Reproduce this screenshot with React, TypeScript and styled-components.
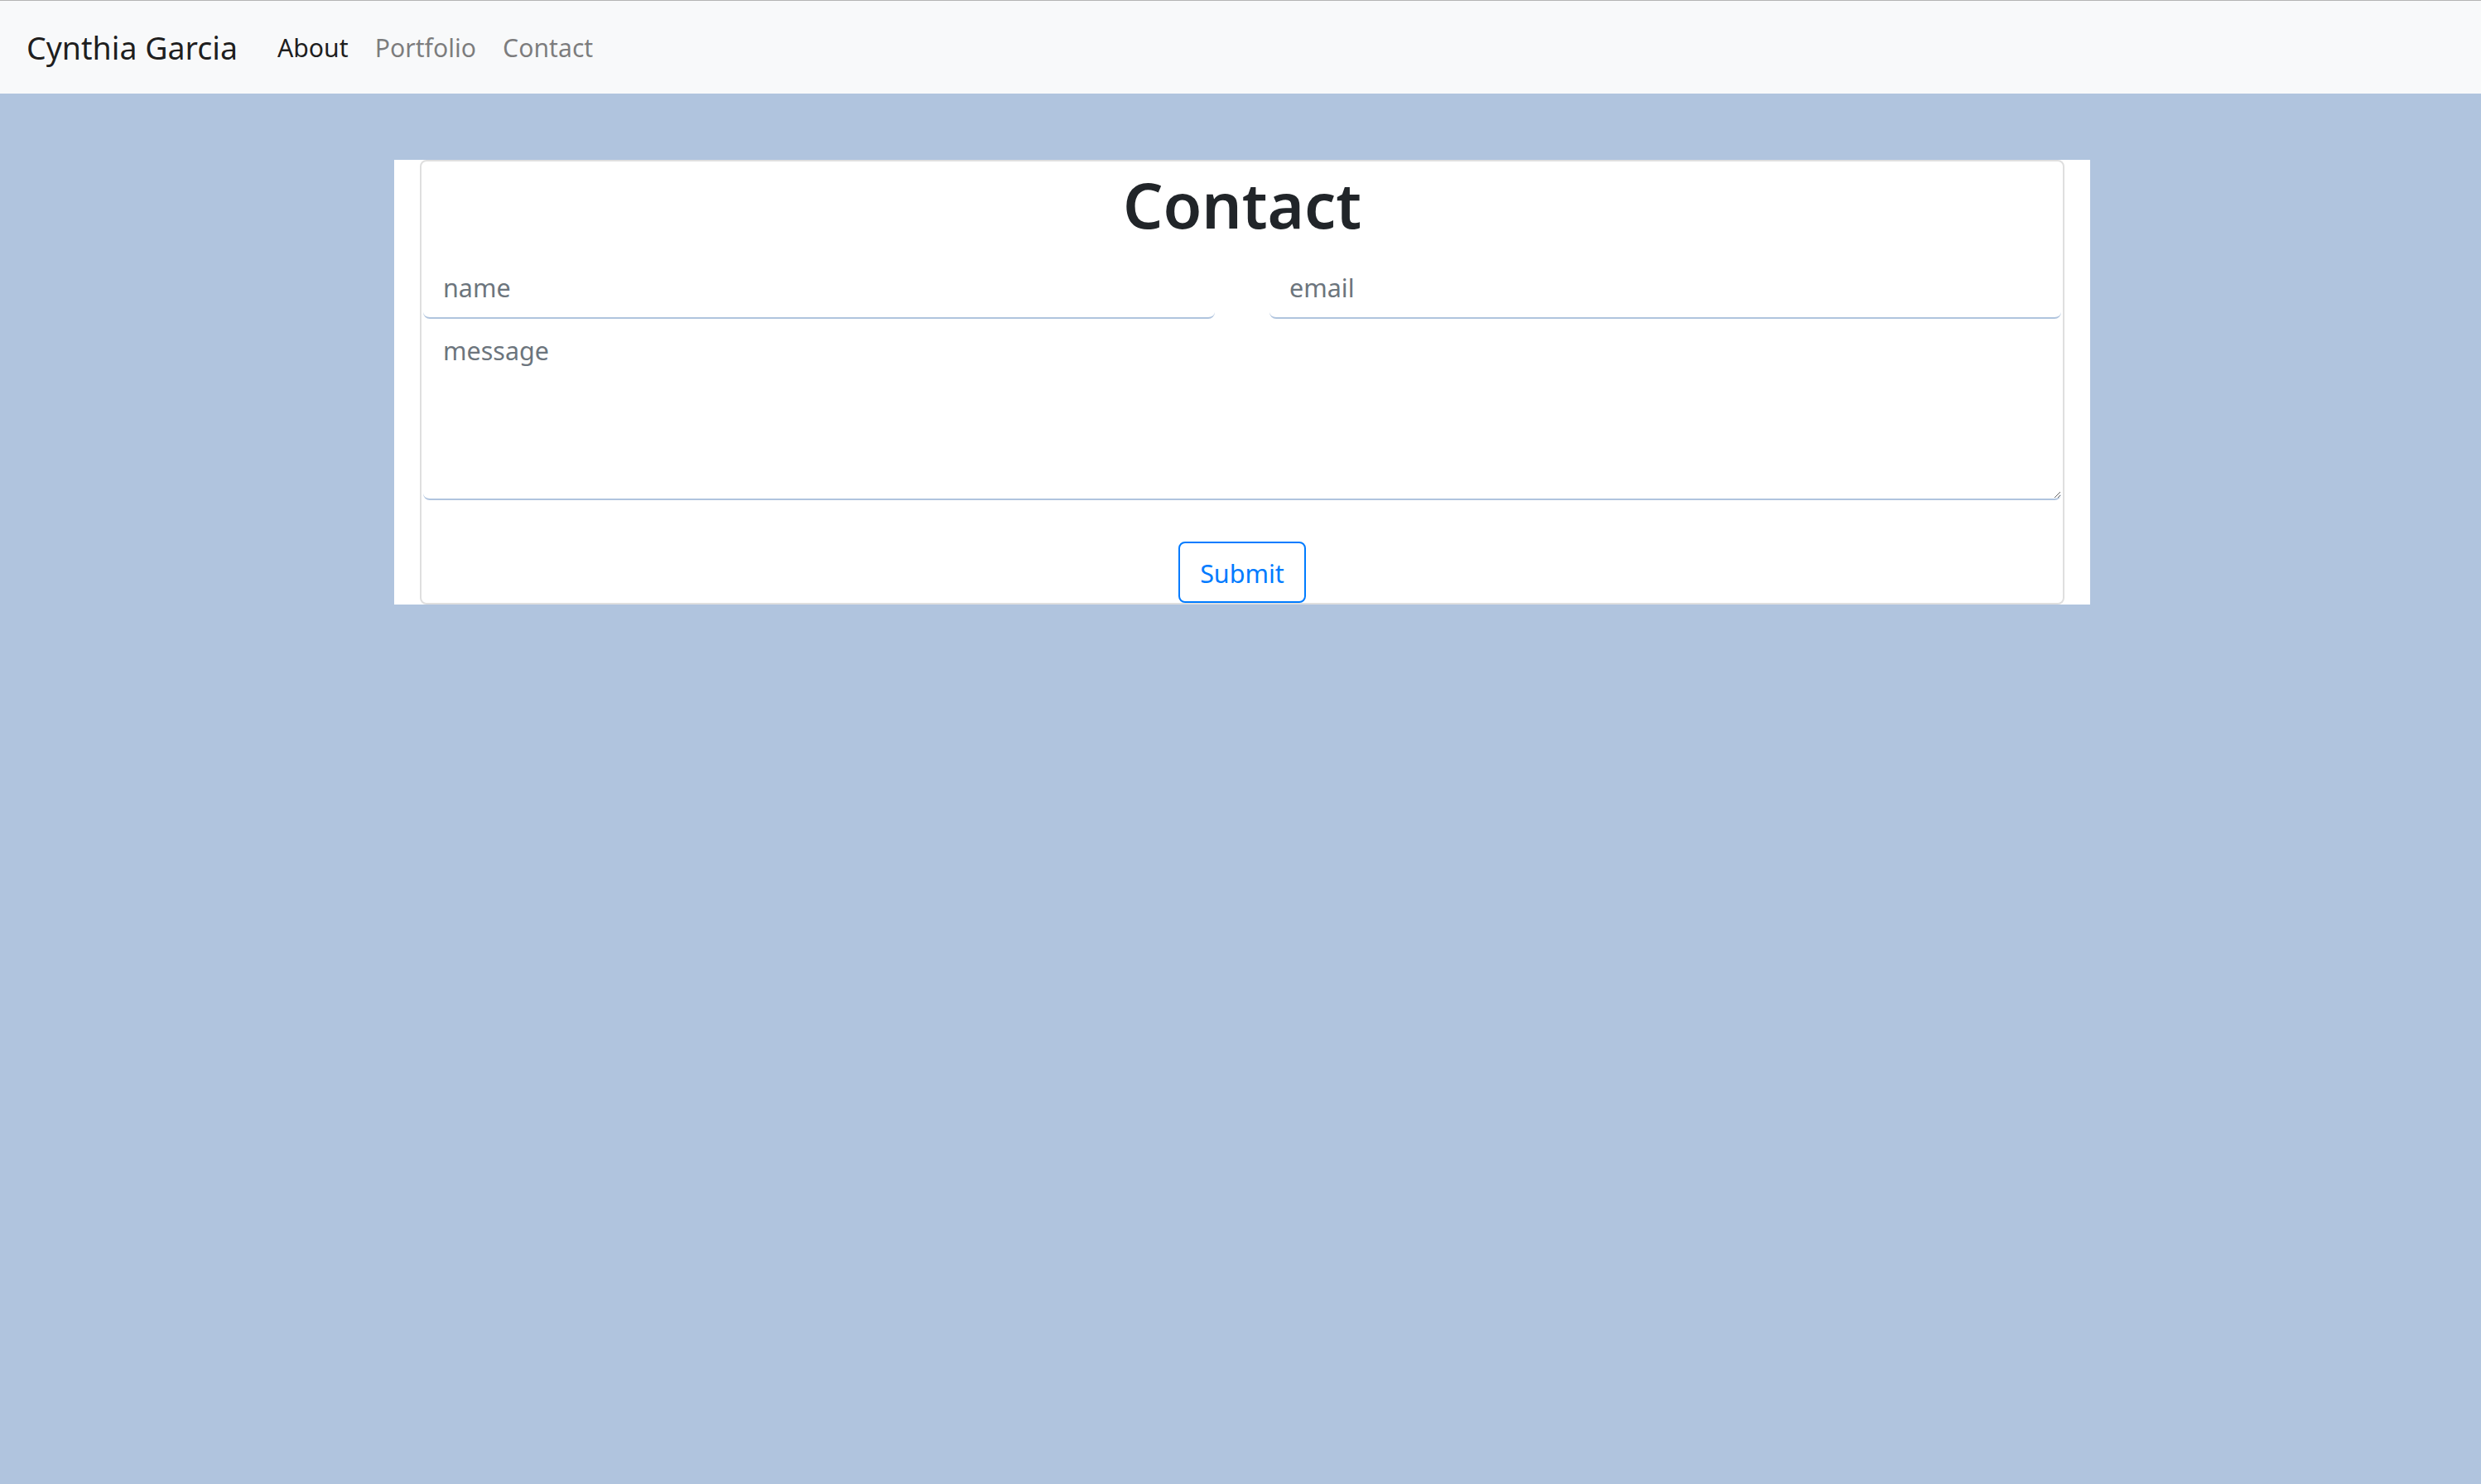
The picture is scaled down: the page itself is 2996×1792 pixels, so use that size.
import React from "react";
import styled, { createGlobalStyle } from "styled-components";

const Global = createGlobalStyle`
  html, body {
    margin: 0;
    padding: 0;
    background: #b0c4de;
    font-family: "Noto Sans", "Open Sans", sans-serif;
    color: #212529;
  }
  * { box-sizing: border-box; }
`;

const NavBar = styled.nav`
  height: 113px;
  border-top: 1px solid #b4b4b4;
  background: #f8f9fa;
  display: flex;
  align-items: center;
  padding: 2px 32px 0;
`;

const Brand = styled.a`
  font-size: 37.5px;
  line-height: 60px;
  color: rgba(0, 0, 0, 0.9);
  margin-right: 32px;
  text-decoration: none;
`;

const NavList = styled.div`
  display: flex;
  align-items: center;
`;

const NavLink = styled.a<{ $active?: boolean }>`
  font-size: 30.2px;
  line-height: 48px;
  padding: 0 16px;
  color: ${(p) => (p.$active ? "rgba(0, 0, 0, 0.9)" : "rgba(0, 0, 0, 0.5)")};
  text-decoration: none;
`;

const Main = styled.main`
  width: 2048px;
  margin: 80px 0 0 calc(50% - 1022px);
  padding: 0 31px;
  background: #ffffff;
`;

const Card = styled.section`
  border: 2px solid #dfdfdf;
  border-radius: 8px;
  display: flex;
  flex-direction: column;
  align-items: stretch;
`;

const Title = styled.h1`
  margin: 0 0 14px;
  padding-top: 4px;
  font-size: 76px;
  line-height: 96px;
  font-weight: 600;
  text-align: center;
  color: #212529;
`;

const Form = styled.form`
  display: flex;
  flex-direction: column;
  padding: 0 2px;
`;

const InputRow = styled.div`
  display: grid;
  grid-template-columns: 1fr 1fr;
  column-gap: 66px;
`;

const fieldBase = `
  border: none;
  border-bottom: 2px solid #b0c4de;
  border-radius: 8px;
  background: #ffffff;
  font-family: "Noto Sans", "Open Sans", sans-serif;
  font-size: 30.5px;
  line-height: 48px;
  color: #495057;
  outline: none;
  width: 100%;
  &::placeholder { color: #6c757d; }
`;

const TextInput = styled.input`
  ${fieldBase}
  height: 76px;
  padding: 2px 24px 0;
`;

const MessageArea = styled.textarea`
  ${fieldBase}
  display: block;
  height: 219px;
  padding: 14px 24px 12px;
  resize: vertical;
`;

const ButtonRow = styled.div`
  display: flex;
  justify-content: center;
  margin-top: 50px;
`;

const SubmitButton = styled.button`
  font-family: "Noto Sans", "Open Sans", sans-serif;
  font-size: 30.5px;
  line-height: 48px;
  padding: 12px 24px 10px;
  border: 2px solid #007bff;
  border-radius: 8px;
  background: transparent;
  color: #007bff;
  cursor: pointer;
`;

export default function App() {
  return (
    <>
      <Global />
      <NavBar>
        <Brand href="#">Cynthia Garcia</Brand>
        <NavList>
          <NavLink href="#" $active>
            About
          </NavLink>
          <NavLink href="#">Portfolio</NavLink>
          <NavLink href="#">Contact</NavLink>
        </NavList>
      </NavBar>
      <Main>
        <Card>
          <Title>Contact</Title>
          <Form onSubmit={(e) => e.preventDefault()}>
            <InputRow>
              <TextInput type="text" placeholder="name" />
              <TextInput type="email" placeholder="email" />
            </InputRow>
            <MessageArea placeholder="message" />
            <ButtonRow>
              <SubmitButton type="submit">Submit</SubmitButton>
            </ButtonRow>
          </Form>
        </Card>
      </Main>
    </>
  );
}
